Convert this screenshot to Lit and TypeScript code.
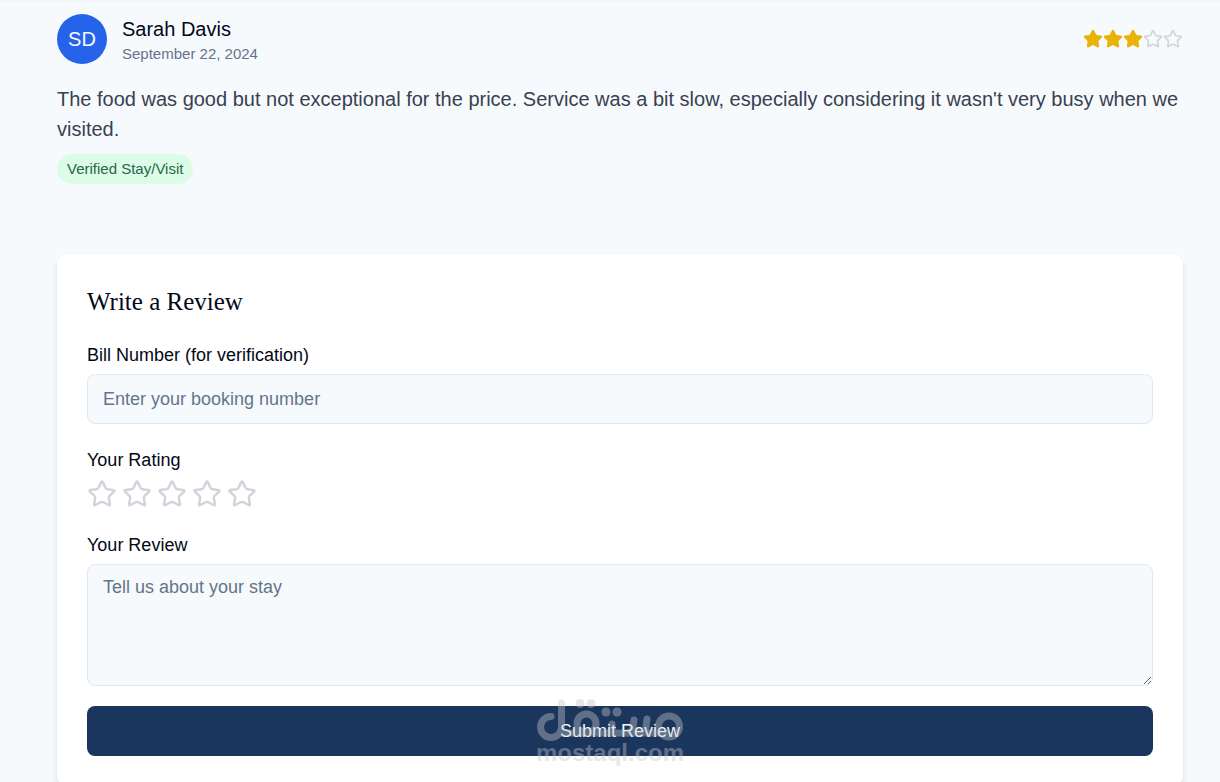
import { LitElement, html, css, svg } from "lit";
import { customElement, property, state } from "lit/decorators.js";

const STAR =
  "M11.525 2.295a.53.53 0 0 1 .95 0l2.31 4.679a2.123 2.123 0 0 0 1.595 1.16l5.166.756a.53.53 0 0 1 .294.904l-3.736 3.638a2.123 2.123 0 0 0-.611 1.878l.882 5.14a.53.53 0 0 1-.771.56l-4.618-2.428a2.122 2.122 0 0 0-1.973 0L6.396 21.01a.53.53 0 0 1-.77-.56l.881-5.139a2.122 2.122 0 0 0-.611-1.879L2.16 9.795a.53.53 0 0 1 .294-.906l5.165-.755a2.122 2.122 0 0 0 1.597-1.16z";

@customElement("star-icon")
export class StarIcon extends LitElement {
  @property({ type: Boolean, reflect: true }) filled = false;

  static styles = css`
    :host {
      display: block;
      width: 20px;
      height: 20px;
      color: #d1d5db;
    }
    :host([filled]) {
      color: #eab308;
    }
    .star {
      display: block;
      width: 100%;
      height: 100%;
      fill: none;
      stroke: currentColor;
      stroke-width: 2;
      stroke-linecap: round;
      stroke-linejoin: round;
    }
    :host([filled]) .star {
      fill: currentColor;
    }
  `;

  render() {
    return html`<svg class="star" viewBox="0 0 24 24" aria-hidden="true"><path d=${STAR}></path></svg>`;
  }
}

@customElement("review-item")
export class ReviewItem extends LitElement {
  @property() name = "";
  @property() initials = "";
  @property() date = "";
  @property({ type: Number }) rating = 0;

  static styles = css`
    :host {
      display: block;
    }
    .head {
      display: flex;
      justify-content: space-between;
      align-items: center;
      margin-bottom: 20px;
    }
    .author {
      display: flex;
      align-items: center;
      gap: 15px;
    }
    .avatar {
      display: flex;
      align-items: center;
      justify-content: center;
      width: 50px;
      height: 50px;
      border-radius: 50%;
      background: #2563eb;
      color: #f8fafc;
      font-size: 20px;
    }
    .name {
      margin: 0;
      font-size: 20px;
      line-height: 30px;
      font-weight: 400;
    }
    .date {
      margin: 0;
      font-size: 15px;
      line-height: 20px;
      color: #64748b;
    }
    .stars {
      display: flex;
    }
    .text {
      margin: 0 0 10px;
      font-size: 20px;
      line-height: 30px;
      color: #374151;
    }
    .badge {
      display: inline-block;
      padding: 5px 10px;
      border-radius: 15px;
      background: #dcfce7;
      color: #276749;
      font-size: 15px;
      line-height: 20px;
      vertical-align: top;
    }
  `;

  render() {
    return html`
      <article>
        <header class="head">
          <div class="author">
            <div class="avatar">${this.initials}</div>
            <div>
              <h4 class="name">${this.name}</h4>
              <p class="date">${this.date}</p>
            </div>
          </div>
          <div class="stars" role="img" aria-label="${this.rating} / 5">
            ${[1, 2, 3, 4, 5].map((n) => html`<star-icon ?filled=${n <= this.rating}></star-icon>`)}
          </div>
        </header>
        <p class="text"><slot></slot></p>
        <span class="badge">Verified Stay/Visit</span>
      </article>
    `;
  }
}

@customElement("review-form")
export class ReviewForm extends LitElement {
  @state() private rating = 0;

  static styles = css`
    :host {
      display: block;
    }
    .card {
      padding: 30px;
      border-radius: 10px;
      background: #ffffff;
      box-shadow: 0 5px 8px -1px rgba(0, 0, 0, 0.1), 0 3px 5px -2px rgba(0, 0, 0, 0.1);
    }
    .title {
      margin: 0 0 23px;
      font-family: "Liberation Serif", "Times New Roman", serif;
      font-size: 25px;
      line-height: 36px;
      font-weight: 400;
    }
    .form {
      display: flex;
      flex-direction: column;
    }
    .field {
      display: flex;
      flex-direction: column;
      gap: 6px;
      min-width: 0;
      margin: 0 0 24px;
    }
    .field.last {
      margin-bottom: 20px;
    }
    .label {
      font-size: 18px;
      line-height: 25px;
    }
    .control {
      box-sizing: border-box;
      display: block;
      width: 100%;
      margin: 0;
      padding: 10px 15px;
      border: 1px solid #e2e8f0;
      border-radius: 8px;
      background: #f7fafd;
      color: inherit;
      font: inherit;
      font-size: 18px;
      line-height: 25px;
    }
    .control::placeholder {
      color: #64748b;
      opacity: 1;
    }
    .line {
      height: 50px;
    }
    .area {
      height: 122px;
      resize: vertical;
    }
    .rating {
      display: flex;
      gap: 5px;
    }
    .pick {
      padding: 0;
      border: 0;
      background: none;
      cursor: pointer;
    }
    .pick star-icon {
      width: 30px;
      height: 30px;
    }
    .submit {
      height: 50px;
      padding: 0 20px;
      border: 0;
      border-radius: 8px;
      background: #1a365d;
      color: #f8fafc;
      font: inherit;
      font-size: 18px;
      cursor: pointer;
    }
  `;

  render() {
    return html`
      <section class="card">
        <h3 class="title">Write a Review</h3>
        <form class="form" @submit=${(e: Event) => e.preventDefault()}>
          <div class="field">
            <label class="label" for="bill">Bill Number (for verification)</label>
            <input class="control line" id="bill" type="text" placeholder="Enter your booking number" />
          </div>
          <div class="field" role="group" aria-labelledby="rating-label">
            <span class="label" id="rating-label">Your Rating</span>
            <div class="rating">
              ${[1, 2, 3, 4, 5].map(
                (n) => html`<button class="pick" type="button" aria-label="${n}" @click=${() => (this.rating = n)}>
                  <star-icon ?filled=${n <= this.rating}></star-icon>
                </button>`
              )}
            </div>
          </div>
          <div class="field last">
            <label class="label" for="review">Your Review</label>
            <textarea class="control area" id="review" placeholder="Tell us about your stay"></textarea>
          </div>
          <button class="submit" type="submit">Submit Review</button>
        </form>
      </section>
    `;
  }
}

@customElement("site-watermark")
export class SiteWatermark extends LitElement {
  static styles = css`
    :host {
      display: block;
      width: 150px;
      opacity: 0.4;
      color: #c6c8ca;
      pointer-events: none;
    }
    .logo {
      display: block;
      width: 150px;
      height: 42px;
    }
    .strokes {
      fill: none;
      stroke: currentColor;
      stroke-width: 7;
      stroke-linecap: round;
      stroke-linejoin: round;
    }
    .dots {
      fill: currentColor;
    }
    .site {
      margin: 0;
      font-size: 24px;
      line-height: 24px;
      font-weight: 700;
      text-align: center;
    }
  `;

  render() {
    return html`
      <svg class="logo" viewBox="0 0 150 42" role="img" aria-label="مستقل">
        ${svg`
          <g class="strokes">
            <path d="M26.500 4V27A10.500 10.500 0 1 1 16 17.500"></path>
            <path d="M27 34H131"></path>
            <circle cx="51.500" cy="24.500" r="9.500"></circle>
            <path d="M77 25V34M99 21L98 28Q97 34 92 34M112 20L111 28Q110 34 104 34"></path>
            <circle cx="134" cy="27.500" r="10.500"></circle>
          </g>
          <g class="dots">
            <circle cx="45" cy="4.500" r="4.500"></circle>
            <circle cx="56" cy="4.500" r="4.500"></circle>
            <circle cx="71" cy="13" r="4.500"></circle>
            <circle cx="82" cy="13" r="4.500"></circle>
          </g>
        `}
      </svg>
      <p class="site">mostaql.com</p>
    `;
  }
}

@customElement("app-root")
export class AppRoot extends LitElement {
  static styles = css`
    :host {
      display: block;
      position: relative;
      overflow: hidden;
      min-height: 100vh;
      box-sizing: border-box;
      padding: 0 37px 0 57px;
      background: linear-gradient(#f0f4f8, #f7fafd 3px);
      color: #020817;
      font-family: "Liberation Sans", Arial, sans-serif;
    }
    .reviews {
      padding: 14px 0 70px;
    }
    .mark {
      position: absolute;
      top: 699px;
      left: calc(50% - 75px);
    }
  `;

  render() {
    return html`
      <main>
        <div class="reviews">
          <review-item name="Sarah Davis" initials="SD" date="September 22, 2024" .rating=${3}
            >The food was good but not exceptional for the price. Service was a bit slow, especially considering it
            wasn't very busy when we visited.</review-item
          >
        </div>
        <review-form></review-form>
      </main>
      <site-watermark class="mark"></site-watermark>
    `;
  }
}
